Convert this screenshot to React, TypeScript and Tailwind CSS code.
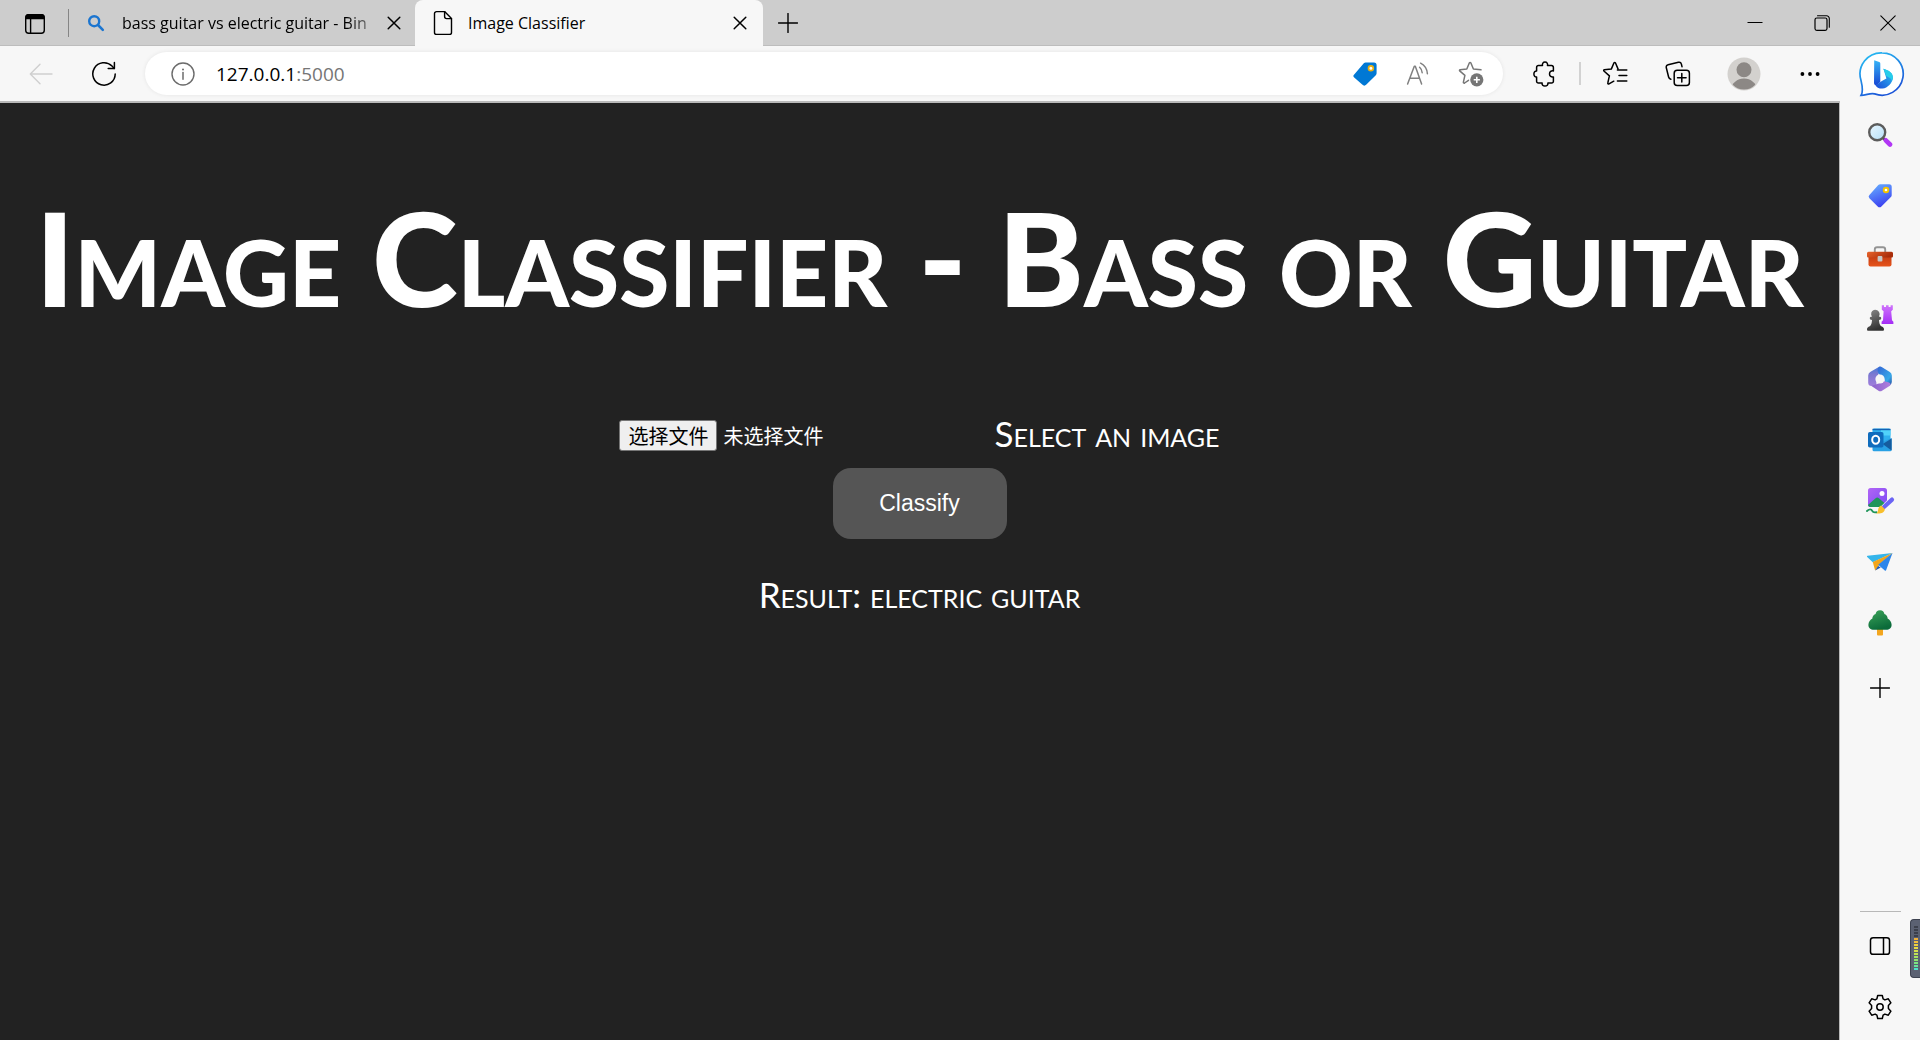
import React from "react";

const line = {
  fill: "none",
  stroke: "currentColor",
  strokeLinecap: "round" as const,
  strokeLinejoin: "round" as const,
};

function TabActionsIcon() {
  return (
    <svg width="22" height="22" viewBox="0 0 22 22" aria-hidden="true">
      <rect x="1.7" y="1.7" width="18.6" height="18.6" rx="3" {...line} strokeWidth="1.4" />
      <path d="M1.5 6.3V4a3 3 0 0 1 3-3h13a3 3 0 0 1 3 3v2.3z" fill="currentColor" />
      <path d="M6.6 6v14" {...line} strokeWidth="1.4" />
    </svg>
  );
}

function SmallSearchIcon() {
  return (
    <svg width="18" height="18" viewBox="0 0 18 18" className="text-[#1b75d0]" aria-hidden="true">
      <circle cx="7.2" cy="7.2" r="5" {...line} strokeWidth="2.4" />
      <path d="M11 11l4.8 4.8" {...line} strokeWidth="2.6" />
    </svg>
  );
}

function CrossIcon() {
  return (
    <svg width="14" height="14" viewBox="0 0 14 14" aria-hidden="true">
      <path d="M1.2 1.2l11.6 11.6M12.8 1.2L1.2 12.8" {...line} strokeWidth="1.5" />
    </svg>
  );
}

function FileIcon() {
  return (
    <svg width="20" height="26" viewBox="0 0 20 26" aria-hidden="true">
      <path d="M11.6 1.6H3.5a2 2 0 0 0-2 2v18.8a2 2 0 0 0 2 2h13a2 2 0 0 0 2-2V8.6z" {...line} strokeWidth="1.4" />
      <path d="M11.6 1.6v5a2 2 0 0 0 2 2h4.9" {...line} strokeWidth="1.4" />
    </svg>
  );
}

function PlusIcon() {
  return (
    <svg width="20" height="20" viewBox="0 0 20 20" aria-hidden="true">
      <path d="M10 .5v19M.5 10h19" {...line} strokeWidth="1.4" />
    </svg>
  );
}

function BackIcon() {
  return (
    <svg width="24" height="22" viewBox="0 0 24 22" className="text-[#cfcfcf]" aria-hidden="true">
      <path d="M23 11H1.5M11 1.2L1.3 11l9.7 9.8" {...line} strokeWidth="1.4" />
    </svg>
  );
}

function ReloadIcon() {
  return (
    <svg width="26" height="26" viewBox="0 0 26 26" aria-hidden="true">
      <path d="M24.2 13A11.2 11.2 0 1 1 21 5.1l2.2 2.3" {...line} strokeWidth="1.5" />
      <path d="M23.4 1.5v6h-6.2" {...line} strokeWidth="1.5" />
    </svg>
  );
}

function InfoIcon() {
  return (
    <svg width="24" height="24" viewBox="0 0 24 24" className="text-[#6b6b6b]" aria-hidden="true">
      <circle cx="12" cy="12" r="11" {...line} strokeWidth="1.4" />
      <path d="M12 10.6v6.6" {...line} strokeWidth="1.5" />
      <circle cx="12" cy="7.4" r="1" fill="currentColor" />
    </svg>
  );
}

function ShoppingTagIcon() {
  return (
    <svg width="24" height="24" viewBox="0 0 24 24" aria-hidden="true">
      <path d="M12.6.5H21a2.6 2.6 0 0 1 2.6 2.6v8.2c0 .8-.3 1.4-.8 1.9l-9.4 9.4a3 3 0 0 1-4.2 0L1.2 15.6a2.2 2.2 0 0 1 0-3.2L10.8 1.3c.5-.5 1.1-.8 1.8-.8z" fill="#0078d4" />
      <circle cx="17.9" cy="6.2" r="2.4" fill="#fff" stroke="#eab010" strokeWidth="1.7" />
    </svg>
  );
}

function ReadAloudIcon() {
  return (
    <svg width="24" height="24" viewBox="0 0 24 24" className="text-[#808080]" aria-hidden="true">
      <path d="M1.6 22L8.3 4.2h1L15.6 22M4 16.2h9.4" {...line} strokeWidth="1.5" />
      <path d="M13.6 5.2c1.6 1.4 2.500 3.300 2.600 5.600M14.600 1.200c3.500 1.800 6.500 6.200 6.800 10.600" {...line} strokeWidth="1.5" />
    </svg>
  );
}

function AddFavoriteIcon() {
  return (
    <svg width="26" height="26" viewBox="0 0 26 26" className="text-[#767676]" aria-hidden="true">
      <path d="M10.5 19.3L6.600 22a.8.8 0 0 1-1.200-.9l1.500-6.700-5.200-4.500a.7.7 0 0 1 .4-1.200l6.700-.7 2.600-6.200a.8.8 0 0 1 1.400 0L15.400 8l7.600.800" {...line} strokeWidth="1.5" />
      <circle cx="18.8" cy="18.8" r="6.6" fill="currentColor" />
      <path d="M18.8 15.7v6.2M15.7 18.8h6.2" stroke="#fff" strokeWidth="1.6" />
    </svg>
  );
}

function PuzzleIcon() {
  return (
    <svg width="24" height="26" viewBox="0 0 24 26" aria-hidden="true">
      <path
        d="M5.400 4.600h4.100c-.5-2 .6-3.500 2.500-3.500s3 1.500 2.500 3.500h4.100a1.800 1.800 0 0 1 1.800 1.800v3.500c-2.200-.4-3.900.9-3.900 3s1.700 3.400 3.900 3v4.300a1.800 1.800 0 0 1-1.800 1.800h-3.700c.3 1.800-.9 3-2.900 3s-3.200-1.200-2.900-3H5.400a1.800 1.800 0 0 1-1.800-1.800v-4.300c-1.600.1-2.700-1.100-2.700-3s1.100-3.100 2.700-3V6.400a1.800 1.800 0 0 1 1.800-1.800z"
        {...line}
        strokeWidth="1.5"
      />
    </svg>
  );
}

function FavoritesIcon() {
  return (
    <svg width="26" height="26" viewBox="0 0 26 26" aria-hidden="true">
      <path d="M11.800 20.200L7 22.900a.8.8 0 0 1-1.200-.9l1.600-7.100-5.500-4.900a.7.7 0 0 1 .4-1.200l7-.7L12 1.800a.8.8 0 0 1 1.400 0l2.700 6.300" {...line} strokeWidth="1.5" />
      <path d="M15.400 9h9.400M17 14.500h7.800M15.400 20h9.400" {...line} strokeWidth="1.5" />
    </svg>
  );
}

function CollectionsIcon() {
  return (
    <svg width="26" height="26" viewBox="0 0 26 26" aria-hidden="true">
      <rect x="9.2" y="9.2" width="15.2" height="15.2" rx="3" {...line} strokeWidth="1.5" />
      <path d="M16.8 12.500v8.600M12.500 16.800h8.600" {...line} strokeWidth="1.5" />
      <path d="M5.800 18.200a3 3 0 0 1-2.200-2.200L1.300 6.800a2.500 2.500 0 0 1 1.800-3L13.400 1.300a2.500 2.500 0 0 1 3 1.800l.6 2.600" {...line} strokeWidth="1.5" />
    </svg>
  );
}

function AvatarIcon() {
  return (
    <svg width="34" height="34" viewBox="0 0 34 34" aria-hidden="true">
      <defs>
        <clipPath id="avatar-clip">
          <circle cx="17" cy="17" r="15.6" />
        </clipPath>
      </defs>
      <circle cx="17" cy="17" r="16.5" fill="#d3d1ce" />
      <g clipPath="url(#avatar-clip)" fill="#8c8885">
        <circle cx="17" cy="12.8" r="7.5" />
        <ellipse cx="17" cy="32" rx="12.5" ry="10.4" />
      </g>
    </svg>
  );
}

function DotsIcon() {
  return (
    <svg width="20" height="6" viewBox="0 0 20 6" aria-hidden="true">
      <circle cx="2.4" cy="3" r="1.9" />
      <circle cx="10" cy="3" r="1.9" />
      <circle cx="17.6" cy="3" r="1.9" />
    </svg>
  );
}

function BingIcon() {
  return (
    <svg width="46" height="46" viewBox="0 0 46 46" aria-hidden="true">
      <defs>
        <linearGradient id="bing-ring" x1="0" y1="0" x2="0.5" y2="1">
          <stop offset="0" stopColor="#27c4f5" />
          <stop offset="1" stopColor="#1c56d8" />
        </linearGradient>
        <linearGradient id="bing-stem" x1="0" y1="0" x2="0" y2="1">
          <stop offset="0" stopColor="#36b4f6" />
          <stop offset="1" stopColor="#1746d4" />
        </linearGradient>
        <linearGradient id="bing-bowl" x1="0" y1="1" x2="1" y2="0">
          <stop offset="0" stopColor="#1b49d8" />
          <stop offset="1" stopColor="#2cc6f2" />
        </linearGradient>
      </defs>
      <path d="M23 1.800a21.200 21.200 0 1 1-7.300 41.100c-4.300-1.300-8.300 1.300-13.600 1.400 2.600-4.300 1-10.300-.2-15.300A21.200 21.200 0 0 1 23 1.800z" fill="#fff" stroke="url(#bing-ring)" strokeWidth="1.7" />
      <path d="M15.200 9.300l5 1.800a1.600 1.600 0 0 1 1.100 1.500v18.500l-4 3.200a2.200 2.200 0 0 1-2.300-2z" fill="url(#bing-stem)" />
      <path d="M16.400 34.200l6.500-4.200 4.500-2.600-3-9.600c5.600 1.600 9.800 4.300 9.500 9.400-.6 4.600-5.300 9.800-10.300 10.400-3.300.2-6.300-1.300-7.200-3.400z" fill="url(#bing-bowl)" />
      <path d="M24.400 17.800c5.600 1.600 9.800 4.300 9.500 9.400-.3 1.200-.7 2-1.200 2.700-.2-2-1.200-3.100-5.300-4.700z" fill="#27cdea" />
    </svg>
  );
}

function SideSearchIcon() {
  return (
    <svg width="26" height="26" viewBox="0 0 26 26" aria-hidden="true">
      <defs>
        <linearGradient id="lens" x1="0" y1="0" x2="1" y2="1">
          <stop offset="0" stopColor="#eaf7ff" />
          <stop offset="1" stopColor="#b5dff8" />
        </linearGradient>
      </defs>
      <path d="M15.500 15.500l3.400 3.200" stroke="#484848" strokeWidth="2.6" />
      <path d="M18.800 18.300l4.200 4.200" stroke="#b236f5" strokeWidth="4.6" strokeLinecap="round" />
      <circle cx="10.2" cy="10.2" r="8" fill="url(#lens)" stroke="#5c5c5c" strokeWidth="2.4" />
    </svg>
  );
}

function SideTagIcon() {
  return (
    <svg width="26" height="26" viewBox="0 0 26 26" aria-hidden="true">
      <defs>
        <linearGradient id="tag-fill" x1="0.2" y1="0" x2="0.6" y2="1">
          <stop offset="0" stopColor="#66adff" />
          <stop offset="1" stopColor="#3a3df0" />
        </linearGradient>
      </defs>
      <path d="M13.200 1.300h9a2.500 2.500 0 0 1 2.500 2.500v8.500c0 .7-.3 1.300-.8 1.800l-9.500 9.300a2.600 2.600 0 0 1-3.700 0l-8.300-8.200a2.200 2.200 0 0 1 0-3.100L11.300 2.100c.5-.5 1.200-.8 1.900-.8z" fill="url(#tag-fill)" />
      <circle cx="19" cy="7" r="2.3" fill="#fff" stroke="#f5c400" strokeWidth="1.9" />
    </svg>
  );
}

function ToolboxIcon() {
  return (
    <svg width="28" height="24" viewBox="0 0 28 24" aria-hidden="true">
      <defs>
        <linearGradient id="box-fill" x1="0" y1="0" x2="0" y2="1">
          <stop offset="0" stopColor="#c23b12" />
          <stop offset="1" stopColor="#e6541c" />
        </linearGradient>
        <linearGradient id="lid-fill" x1="0" y1="0" x2="1" y2="0.3">
          <stop offset="0" stopColor="#e8642c" />
          <stop offset="1" stopColor="#a82c0a" />
        </linearGradient>
      </defs>
      <path d="M8.800 8V4.500A2.300 2.300 0 0 1 11.100 2.200h5.800a2.300 2.300 0 0 1 2.300 2.300V8" fill="none" stroke="#949494" strokeWidth="1.9" />
      <path d="M2.500 10h23v9.600a2 2 0 0 1-2 2h-19a2 2 0 0 1-2-2z" fill="url(#box-fill)" />
      <path d="M2.500 6.700h23a1.500 1.500 0 0 1 1.500 1.500v3.100a1.200 1.200 0 0 1-1.200 1.200H2.200A1.200 1.200 0 0 1 1 11.300V8.200a1.500 1.500 0 0 1 1.500-1.500z" fill="url(#lid-fill)" />
      <rect x="11.600" y="11" width="4.800" height="5.600" rx="1" fill="#c6c6c6" />
    </svg>
  );
}

function ChessIcon() {
  return (
    <svg width="28" height="28" viewBox="0 0 28 28" aria-hidden="true">
      <defs>
        <linearGradient id="pawn" x1="0" y1="0" x2="0.3" y2="1">
          <stop offset="0" stopColor="#8a8a8a" />
          <stop offset="1" stopColor="#333" />
        </linearGradient>
        <linearGradient id="rook" x1="0" y1="0" x2="0" y2="1">
          <stop offset="0" stopColor="#cf74fb" />
          <stop offset="1" stopColor="#a52df6" />
        </linearGradient>
      </defs>
      <path d="M15.800 1.200h2.200v1.800h2v-1.800h2.600v1.800h2v-1.800h2.200v4.600l-1.600 1.400.8 9.100 1.400 1.500v2.100H15.600v-2.100l1.400-1.500.6-9.100-1.800-1.400z" fill="url(#rook)" />
      <path d="M5.300 8.600a4.300 4.300 0 1 1 7.600 3.900c1.700.1 2.300.6 2.300 1.700s-.8 1.600-2.200 1.700c.1 2.900.7 5 2.200 6.300 1.800.7 2.800 1.500 2.800 3.100 0 1-.5 1.500-1.300 1.500H2.300c-.8 0-1.300-.5-1.300-1.500 0-1.600 1-2.400 2.800-3.100 1.500-1.300 2.100-3.400 2.200-6.300-1.400-.1-2.200-.6-2.200-1.700s.6-1.600 2.300-1.700a4.300 4.300 0 0 1-.8-3.900z" fill="url(#pawn)" />
    </svg>
  );
}

function OfficeIcon() {
  return (
    <svg width="26" height="26" viewBox="0 0 26 26" aria-hidden="true">
      <defs>
        <linearGradient id="m-left" x1="0" y1="0" x2="0" y2="1">
          <stop offset="0" stopColor="#4379d8" />
          <stop offset="0.4" stopColor="#7c78d0" />
          <stop offset="1" stopColor="#a07ddc" />
        </linearGradient>
        <linearGradient id="m-right" x1="0" y1="0" x2="1" y2="1">
          <stop offset="0" stopColor="#3465d4" />
          <stop offset="0.7" stopColor="#37a8e8" />
          <stop offset="1" stopColor="#244a9e" />
        </linearGradient>
        <linearGradient id="m-bottom" x1="0" y1="0" x2="1" y2="0">
          <stop offset="0" stopColor="#8a63cc" />
          <stop offset="1" stopColor="#b07fdd" />
        </linearGradient>
      </defs>
      <path d="M12.600.600L3.200 6a4 4 0 0 0-2 3.400v7.400a3.500 3.500 0 0 0 3.300 3.300l5-.2-.2-6.600 2.300-5.600z" fill="url(#m-left)" />
      <path d="M12.600.600c-2.300 1.500-2.600 4.500-.9 7.400l5.200 3.500 2 8 3.600-.1a4 4 0 0 0 2.300-3.400V9.600a4 4 0 0 0-2-3.500L14.700.9a2 2 0 0 0-2.100-.3z" fill="url(#m-right)" />
      <path d="M4.500 20.100l7 4.700a3.500 3.500 0 0 0 3.500 0l7.500-4.800c1.500-1 1.500-2.500-.5-3.500l-5.600-1.500-4.900 2.600z" fill="url(#m-bottom)" />
      <circle cx="13" cy="13" r="4.6" fill="#f7f7f7" />
    </svg>
  );
}

function OutlookIcon() {
  return (
    <svg width="26" height="26" viewBox="0 0 26 26" aria-hidden="true">
      <path d="M7 1.500h15a1.500 1.500 0 0 1 1.500 1.500v12H5.500V3A1.500 1.500 0 0 1 7 1.500z" fill="#2fb0ee" />
      <path d="M14 2.500h9.500v6H14z" fill="#50d2fa" />
      <path d="M5.500 1.800h18v1.400h-18z" fill="#1262b4" />
      <path d="M5.500 13l8 2.500L24.600 11v11.800a1.500 1.500 0 0 1-1.500 1.500H7a1.500 1.500 0 0 1-1.500-1.500z" fill="#28a0e4" />
      <path d="M24.600 11.500v12l-9-6.600z" fill="#155c9e" />
      <rect x="1" y="5" width="15.5" height="15.5" rx="1.8" fill="#0f6cbd" />
      <ellipse cx="8.7" cy="12.7" rx="3.5" ry="4" fill="none" stroke="#fff" strokeWidth="2" />
    </svg>
  );
}

function PaintIcon() {
  return (
    <svg width="30" height="28" viewBox="0 0 30 28" aria-hidden="true">
      <defs>
        <linearGradient id="photo" x1="0" y1="0" x2="1" y2="1">
          <stop offset="0" stopColor="#b264f6" />
          <stop offset="1" stopColor="#7b4cf4" />
        </linearGradient>
      </defs>
      <rect x="3" y="1" width="19" height="19" rx="2.6" fill="url(#photo)" />
      <circle cx="17" cy="6.5" r="2.5" fill="#fff" />
      <path d="M3 18l7.600-6.800a2.500 2.500 0 0 1 3.300 0L20 16.500 16 20H5.600A2.600 2.600 0 0 1 3 18z" fill="#20955a" />
      <path d="M14 27l14-14" stroke="#f7f7f7" strokeWidth="8" />
      <path d="M2 24c2.600-2.400 4.400-1.900 5.200-.2.7 1.500 2 1.900 4.300 1.400" fill="none" stroke="#20955a" strokeWidth="1.9" strokeLinecap="round" />
      <path d="M27 12.600L19 20" stroke="#6b64f4" strokeWidth="4.2" strokeLinecap="round" />
      <path d="M16.200 18.400l3.500 3.500c.6 3-3 5.200-8.800 4.600 2-.8 2-2.300 2.300-4.200.3-2.300 1.500-3.500 3-3.900z" fill="#f8bf2c" />
    </svg>
  );
}

function PlaneIcon() {
  return (
    <svg width="28" height="22" viewBox="0 0 28 22" aria-hidden="true">
      <path d="M26.500 2L1.500 4.700a.7.7 0 0 0-.3 1.200l5.600 5.300z" fill="#35b5ea" />
      <path d="M26.500 2L6.800 11l2.300 8.500L14 13z" fill="#f2a51c" />
      <path d="M9.100 19.500l3-4.500 2.700 1.500z" fill="#1d58b8" />
      <path d="M26.500 2L12.200 13.800l6.600 5.700a.9.900 0 0 0 1.400-.4z" fill="#2d86ea" />
    </svg>
  );
}

function TreeIcon() {
  return (
    <svg width="26" height="28" viewBox="0 0 26 28" aria-hidden="true">
      <defs>
        <linearGradient id="tree-fill" x1="0" y1="0" x2="0.4" y2="1">
          <stop offset="0" stopColor="#3da45a" />
          <stop offset="1" stopColor="#0b6b3a" />
        </linearGradient>
      </defs>
      <rect x="10" y="18" width="6" height="8.5" rx="1" fill="#f3a61e" />
      <path d="M13 1.300c2.700 0 4 1.600 4.400 3.600 2.300 1 3.300 2.600 3.200 4.500 2.100 1.200 4 3.600 4 6.300 0 3.400-2.300 5-5.300 5H6.700c-3 0-5.300-1.600-5.300-5 0-2.700 1.900-5.100 4-6.300-.1-1.900.9-3.500 3.200-4.500.4-2 1.700-3.600 4.400-3.600z" fill="url(#tree-fill)" />
    </svg>
  );
}

function PanelIcon() {
  return (
    <svg width="22" height="20" viewBox="0 0 22 20" aria-hidden="true">
      <rect x="1.5" y="1.7" width="19" height="16.6" rx="2.6" {...line} strokeWidth="1.5" />
      <path d="M14.500 2v16" {...line} strokeWidth="1.5" />
    </svg>
  );
}

function GearIcon() {
  return (
    <svg width="26" height="26" viewBox="0 0 26 26" aria-hidden="true">
      <circle cx="13" cy="13" r="3.2" {...line} strokeWidth="1.5" />
      <path
        d="M10.700 1.500h4.600l.8 3.400 1.800 1 3.400-1.100 2.600 4-2.500 2.600v3.200l2.500 2.600-2.600 4-3.400-1.100-1.800 1-.8 3.400h-4.600l-.8-3.400-1.800-1-3.400 1.100-2.600-4 2.500-2.600v-3.200L2.100 8.800l2.600-4 3.400 1.100 1.800-1z"
        {...line}
        strokeWidth="1.5"
      />
    </svg>
  );
}

function MinimizeIcon() {
  return (
    <svg width="16" height="16" viewBox="0 0 16 16" aria-hidden="true">
      <path d="M.5 7.500h15" stroke="currentColor" strokeWidth="1" />
    </svg>
  );
}

function RestoreIcon() {
  return (
    <svg width="16" height="16" viewBox="0 0 16 16" aria-hidden="true">
      <rect x="1" y="3" width="12" height="12.4" rx="1.8" {...line} strokeWidth="1.2" />
      <path d="M3.500.8h9A2.700 2.700 0 0 1 15.300 3.500v8.800" {...line} strokeWidth="1.1" />
    </svg>
  );
}

function CloseWindowIcon() {
  return (
    <svg width="16" height="16" viewBox="0 0 16 16" aria-hidden="true">
      <path d="M.8.8l14.400 14.400M15.200.8L.8 15.200" {...line} strokeWidth="1.1" />
    </svg>
  );
}

const sidebarApps: { label: string; Icon: () => React.JSX.Element }[] = [
  { label: "Search", Icon: SideSearchIcon },
  { label: "Shopping", Icon: SideTagIcon },
  { label: "Tools", Icon: ToolboxIcon },
  { label: "Games", Icon: ChessIcon },
  { label: "Microsoft 365", Icon: OfficeIcon },
  { label: "Outlook", Icon: OutlookIcon },
  { label: "Image Creator", Icon: PaintIcon },
  { label: "Drop", Icon: PlaneIcon },
  { label: "E-tree", Icon: TreeIcon },
];

const meterBars = [
  "bg-[#3c404c]", "bg-[#3c404c]", "bg-[#3c404c]", "bg-[#3c404c]",
  "bg-[#f0b13c]", "bg-[#f0bf3c]", "bg-[#ecd03f]", "bg-[#e6dc42]",
  "bg-[#d5e04b]", "bg-[#bfe255]", "bg-[#a6e360]", "bg-[#8fe46e]",
  "bg-[#7be482]", "bg-[#68e39b]", "bg-[#4fe0cc]",
];

function TabStrip() {
  return (
    <header className="flex h-[46px] items-stretch bg-[#cdcdcd] shadow-[inset_0_-1px_0_#bdbdbd]">
      <button aria-label="Tab actions" className="flex w-[68px] items-center justify-center pl-px pt-px">
        <TabActionsIcon />
      </button>
      <div className="my-[9px] w-px bg-[#858585]" />
      <div className="flex w-[346px] items-center pl-[18px] pr-[13px]">
        <SmallSearchIcon />
        <span className="ml-[17px] flex-1 whitespace-nowrap bg-linear-to-r from-black from-85% to-transparent bg-clip-text text-[16px] leading-6 text-transparent">
          bass guitar vs electric guitar - Bin
        </span>
        <button aria-label="Close bass guitar tab" className="p-px">
          <CrossIcon />
        </button>
      </div>
      <div className="flex w-[348px] items-center rounded-t-[8px] bg-[#f7f7f7] pl-[18px] pr-[15px]">
        <FileIcon />
        <span className="ml-[15px] flex-1 text-[16px] leading-6">Image Classifier</span>
        <button aria-label="Close Image Classifier tab" className="p-px">
          <CrossIcon />
        </button>
      </div>
      <button aria-label="New tab" className="flex w-[50px] items-center justify-center">
        <PlusIcon />
      </button>
      <div className="flex-1" />
      <div className="flex">
        <button aria-label="Minimize" className="flex w-[67px] items-center justify-center">
          <MinimizeIcon />
        </button>
        <button aria-label="Restore" className="flex w-[67px] items-center justify-center">
          <RestoreIcon />
        </button>
        <button aria-label="Close window" className="flex w-[65px] items-center justify-center">
          <CloseWindowIcon />
        </button>
      </div>
    </header>
  );
}

function Toolbar() {
  return (
    <nav className="flex h-[55px] items-center bg-[#f7f7f7] pl-[10px]">
      <button aria-label="Back" className="flex w-[62px] justify-center">
        <BackIcon />
      </button>
      <button aria-label="Refresh" className="flex w-[63px] justify-center">
        <ReloadIcon />
      </button>
      <div className="ml-[10px] flex h-[43px] flex-1 items-center rounded-full bg-white pl-[26px] pr-[6px] shadow-[0_0_4px_rgba(0,0,0,0.08)]">
        <button aria-label="View site information">
          <InfoIcon />
        </button>
        <p className="ml-[21px] flex-1 text-[19px] leading-6">
          127.0.0.1<span className="text-[#767676]">:5000</span>
        </p>
        <button aria-label="Shopping" className="flex w-[53px] justify-center">
          <ShoppingTagIcon />
        </button>
        <button aria-label="Read aloud" className="flex w-[53px] justify-center">
          <ReadAloudIcon />
        </button>
        <button aria-label="Add to favorites" className="flex w-[53px] justify-center">
          <AddFavoriteIcon />
        </button>
      </div>
      <button aria-label="Extensions" className="ml-4 flex w-[52px] justify-center">
        <PuzzleIcon />
      </button>
      <div className="mx-2 h-[23px] w-[2px] bg-[#d2d2d2]" />
      <button aria-label="Favorites" className="flex w-[52px] justify-center">
        <FavoritesIcon />
      </button>
      <button aria-label="Collections" className="ml-1 flex w-[66px] justify-center">
        <CollectionsIcon />
      </button>
      <button aria-label="Profile" className="flex w-[66px] justify-center">
        <AvatarIcon />
      </button>
      <button aria-label="Settings and more" className="flex w-[66px] justify-center">
        <DotsIcon />
      </button>
      <button aria-label="Bing" className="flex w-[77px] justify-center">
        <BingIcon />
      </button>
    </nav>
  );
}

function Sidebar() {
  return (
    <aside className="flex w-[80px] flex-col items-center bg-[#f7f7f7] pt-[3px]">
      {sidebarApps.map(({ label, Icon }) => (
        <button key={label} aria-label={label} className="flex h-[61px] w-full items-center justify-center">
          <Icon />
        </button>
      ))}
      <button aria-label="Customize" className="flex h-[70px] w-full items-center justify-center">
        <PlusIcon />
      </button>
      <div className="flex-1" />
      <div className="h-px w-[41px] bg-[#b8b8b8]" />
      <button aria-label="Hide sidebar" className="mt-[3px] flex h-[61px] w-full items-center justify-center">
        <PanelIcon />
      </button>
      <button aria-label="Settings" className="mb-[3px] flex h-[61px] w-full items-center justify-center">
        <GearIcon />
      </button>
    </aside>
  );
}

function ClassifierPage() {
  return (
    <main className="flex min-w-0 flex-1 flex-col items-center border-r border-t-2 border-r-[#b9b9b9] border-t-[#b9b9b9] bg-[#222222] font-['Lato',cursive] text-white">
      <h1 className="mt-[74px] whitespace-nowrap text-[130px] font-black leading-[160px] [font-variant-caps:small-caps]">
        Image Classifier - Bass or Guitar
      </h1>
      <form className="mt-[76px] flex flex-col items-center" onSubmit={(e) => e.preventDefault()}>
        <div className="flex items-center">
          <div className="relative flex w-[375px] items-center pt-1 font-['Noto_Sans_CJK_SC',sans-serif] text-[20px] leading-[29px]">
            <input id="image" type="file" className="sr-only" />
            <label htmlFor="image" className="rounded-[3px] border border-[#767676] bg-[#efefef] px-[8px] text-black">
              选择文件
            </label>
            <span className="ml-[6px]">未选择文件</span>
          </div>
          <label htmlFor="image" className="whitespace-nowrap text-[35px] leading-[40px] [font-variant-caps:small-caps]">
            Select an image
          </label>
        </div>
        <button type="submit" className="mt-[15px] h-[71px] w-[174px] rounded-[18px] bg-[#555555] font-['Liberation_Sans',sans-serif] text-[23px]">
          Classify
        </button>
      </form>
      <p className="mt-[35px] whitespace-nowrap text-[35px] leading-[40px] [font-variant-caps:small-caps]">
        Result: electric guitar
      </p>
    </main>
  );
}

function EdgeMeter() {
  return (
    <div className="fixed bottom-[62px] right-0 flex h-[59px] w-[10px] flex-col items-end gap-px rounded-l-[4px] border border-r-0 border-[#3d4250] bg-[#5b6172] pr-[2px] pt-[6px]">
      {meterBars.map((color, i) => (
        <div key={i} className={`h-[2px] w-[4px] ${color}`} />
      ))}
    </div>
  );
}

export default function App() {
  return (
    <div className="flex min-h-screen flex-col bg-[#f7f7f7] font-['Open_Sans','Noto_Sans',sans-serif] text-black">
      <TabStrip />
      <Toolbar />
      <div className="flex flex-1">
        <ClassifierPage />
        <Sidebar />
      </div>
      <EdgeMeter />
    </div>
  );
}
